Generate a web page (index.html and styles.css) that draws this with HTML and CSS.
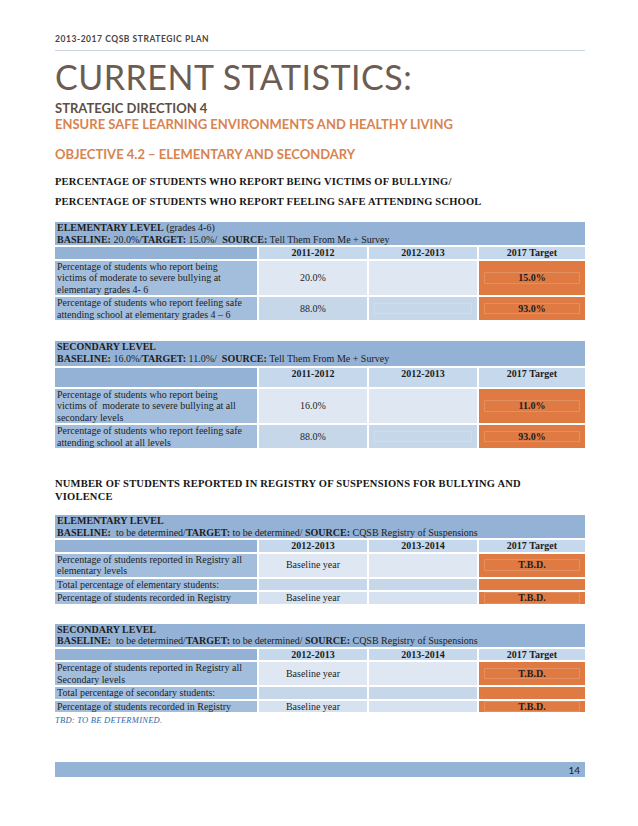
FILE: index.html
```html
<!DOCTYPE html>
<html lang="en">
<head>
<meta charset="utf-8">
<title>2013-2017 CQSB Strategic Plan – Current Statistics</title>
<link rel="stylesheet" href="styles.css">
</head>
<body>
<div class="page">
  <div class="running">2013-2017 CQSB STRATEGIC PLAN</div>
  <h1 class="title">CURRENT STATISTICS:</h1>
  <div class="dir">STRATEGIC DIRECTION 4</div>
  <div class="ens">ENSURE SAFE LEARNING ENVIRONMENTS AND HEALTHY LIVING</div>
  <div class="obj">OBJECTIVE 4.2 – ELEMENTARY AND SECONDARY</div>
  <p class="sect s1">PERCENTAGE OF STUDENTS WHO REPORT BEING VICTIMS OF BULLYING/<br>PERCENTAGE OF STUDENTS WHO REPORT FEELING SAFE ATTENDING SCHOOL</p>

  <div class="tbl t1">
    <div class="band"><b>ELEMENTARY LEVEL</b> (grades 4-6)<br><b>BASELINE:</b> 20.0%/<b>TARGET:</b> 15.0%/&nbsp; <b>SOURCE:</b> Tell Them From Me + Survey</div>
    <div class="c hl"></div><div class="c hd">2011-2012</div><div class="c hd">2012-2013</div><div class="c hd">2017 Target</div>
    <div class="c lb">Percentage of students who report being<br>victims of moderate to severe bullying at<br>elementary grades 4- 6</div>
    <div class="c v d1">20.0%</div><div class="c v d1"></div><div class="c v tg"><span class="in">15.0%</span></div>
    <div class="c lb">Percentage of students who report feeling safe<br>attending school at elementary grades 4 – 6</div>
    <div class="c v d2">88.0%</div><div class="c v d2"><span class="in"></span></div><div class="c v tg"><span class="in">93.0%</span></div>
  </div>

  <div class="tbl t2">
    <div class="band"><b>SECONDARY LEVEL</b><br><b>BASELINE:</b> 16.0%/<b>TARGET:</b> 11.0%/&nbsp; <b>SOURCE:</b> Tell Them From Me + Survey</div>
    <div class="c hl tall"></div><div class="c hd tall">2011-2012</div><div class="c hd tall">2012-2013</div><div class="c hd tall">2017 Target</div>
    <div class="c lb">Percentage of students who report being<br>victims of&nbsp; moderate to severe bullying at all<br>secondary levels</div>
    <div class="c v d1">16.0%</div><div class="c v d1"></div><div class="c v tg"><span class="in">11.0%</span></div>
    <div class="c lb">Percentage of students who report feeling safe<br>attending school at all levels</div>
    <div class="c v d2">88.0%</div><div class="c v d2"><span class="in"></span></div><div class="c v tg"><span class="in">93.0%</span></div>
  </div>

  <p class="sect s2">NUMBER OF STUDENTS REPORTED IN REGISTRY OF SUSPENSIONS FOR BULLYING AND<br>VIOLENCE</p>

  <div class="tbl t3">
    <div class="band"><b>ELEMENTARY LEVEL</b><br><b>BASELINE:</b>&nbsp; to be determined/<b>TARGET:</b> to be determined/ <b>SOURCE:</b> CQSB Registry of Suspensions</div>
    <div class="c hl"></div><div class="c hd">2012-2013</div><div class="c hd">2013-2014</div><div class="c hd">2017 Target</div>
    <div class="c lb">Percentage of students reported in Registry all<br>elementary levels</div>
    <div class="c v d1">Baseline year</div><div class="c v d1"></div><div class="c v tg"><span class="in">T.B.D.</span></div>
    <div class="c lb">Total percentage of elementary students:</div>
    <div class="c v d2"></div><div class="c v d2"></div><div class="c v tg"></div>
    <div class="c lb">Percentage of students recorded in Registry</div>
    <div class="c v d3">Baseline year</div><div class="c v d3"></div><div class="c v tg"><span class="in">T.B.D.</span></div>
  </div>

  <div class="tbl t4">
    <div class="band"><b>SECONDARY LEVEL</b><br><b>BASELINE:</b>&nbsp; to be determined/<b>TARGET:</b> to be determined/ <b>SOURCE:</b> CQSB Registry of Suspensions</div>
    <div class="c hl"></div><div class="c hd">2012-2013</div><div class="c hd">2013-2014</div><div class="c hd">2017 Target</div>
    <div class="c lb">Percentage of students reported in Registry all<br>Secondary levels</div>
    <div class="c v d1">Baseline year</div><div class="c v d1"></div><div class="c v tg"><span class="in">T.B.D.</span></div>
    <div class="c lb">Total percentage of secondary students:</div>
    <div class="c v d2"></div><div class="c v d2"></div><div class="c v tg"></div>
    <div class="c lb">Percentage of students recorded in Registry</div>
    <div class="c v d3">Baseline year</div><div class="c v d3"></div><div class="c v tg"><span class="in">T.B.D.</span></div>
  </div>
  <div class="note">TBD: TO BE DETERMINED.</div>

  <div class="foot">14</div>
</div>
</body>
</html>
```

FILE: styles.css
```css
html, body {
  margin: 0;
  background: #ffffff;
}

.page {
  width: 530px;
  padding: 34px 53px 0 55px;
  font-family: "Liberation Serif", "Times New Roman", serif;
  color: #1b1b1b;
}

.running {
  font-family: Lato, "Open Sans", sans-serif;
  font-weight: 700;
  font-size: 8.5px;
  line-height: 11px;
  letter-spacing: 0.55px;
  color: #4b4540;
  padding-bottom: 5px;
  border-bottom: 1px solid #cbd6e2;
}

.title {
  font-family: Lato, "Open Sans", sans-serif;
  font-weight: 400;
  font-size: 34px;
  line-height: 34px;
  letter-spacing: 0.5px;
  color: #6c5c51;
  margin: 9px 0 0;
}

.dir, .ens, .obj {
  font-family: Lato, "Open Sans", sans-serif;
  font-weight: 700;
  font-size: 13px;
  line-height: 16px;
}

.dir {
  color: #5e4f45;
  margin-top: 6px;
}

.ens {
  color: #d9834f;
}

.obj {
  color: #d9834f;
  margin-top: 14px;
}

.sect {
  font-weight: 700;
  font-size: 10.5px;
  letter-spacing: 0.2px;
  color: #161616;
  margin: 0;
}

.s1 {
  line-height: 20px;
  margin-top: 10px;
}

.s2 {
  line-height: 13px;
  margin-top: 29px;
}

.tbl {
  display: grid;
  grid-template-columns: 202px 108px 108px 106px;
  gap: 2px;
  font-size: 10px;
  line-height: 11.5px;
  color: #1d1d1d;
}

.t1 { margin-top: 10px; }
.t2 { margin-top: 21px; }
.t3 { margin-top: 12px; }
.t4 { margin-top: 20px; }

.band {
  grid-column: 1 / -1;
  background: #94b2d5;
  padding: 0 2px;
}

.t2 .band {
  padding-bottom: 2px;
}

.c {
  min-height: 11.5px;
}

.hl {
  background: #94b2d5;
}

.hd {
  background: #c5d8ec;
  text-align: center;
  font-weight: 700;
}

.tall {
  padding-bottom: 7px;
}

.lb {
  background: #a3bedd;
  padding-left: 2px;
}

.v {
  display: flex;
  align-items: center;
  justify-content: center;
}

.d1 { background: #dfe8f2; }
.d2 { background: #c6d7ea; }
.d3 { background: #d6e2ef; }

.tg {
  background: #df7a43;
  font-weight: 700;
}

.in {
  flex: 1;
  margin: 0 5px;
  text-align: center;
  line-height: 11.5px;
  min-height: 11.5px;
  box-shadow: inset 0 0 0 1px rgba(255, 255, 255, 0.16);
}

.note {
  font-style: italic;
  font-size: 8.5px;
  letter-spacing: 0.25px;
  color: #2f6aa8;
  line-height: 12px;
  margin-top: 2px;
}

.foot {
  margin-top: 36px;
  height: 15px;
  background: #95b3d5;
  text-align: right;
  font-family: Lato, "Open Sans", sans-serif;
  font-size: 10px;
  line-height: 16px;
  padding-right: 5px;
  color: #1c1c1c;
}
```
